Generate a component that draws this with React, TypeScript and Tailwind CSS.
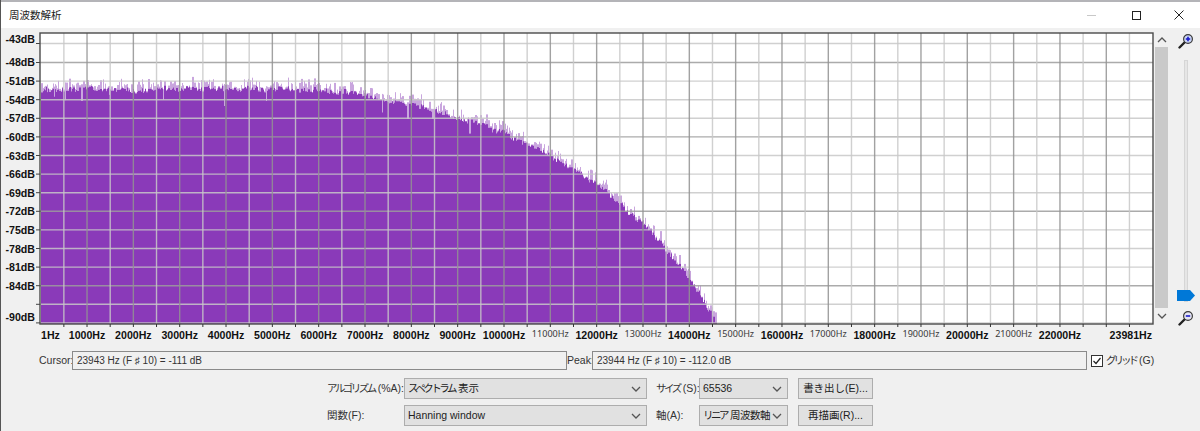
import React from "react";

const font = "[font-family:'Liberation_Sans','Noto_Sans_CJK_JP',sans-serif]";

function rng(seed: number) {
  return () => {
    seed |= 0;
    seed = (seed + 0x6d2b79f5) | 0;
    let t = Math.imul(seed ^ (seed >>> 15), 1 | seed);
    t = (t + Math.imul(t ^ (t >>> 7), 61 | t)) ^ t;
    return ((t ^ (t >>> 14)) >>> 0) / 4294967296;
  };
}

const envPts: [number, number][] = [
  [41, 89], [280, 89], [345, 92], [400, 102], [450, 115], [500, 131], [550, 155], [600, 187], [650, 231], [680, 267], [700, 295], [716, 324],
];
function env(x: number) {
  for (let i = 1; i < envPts.length; i++) {
    const [a, b] = envPts[i - 1];
    const [c, d] = envPts[i];
    if (x <= c) return b + ((d - b) * (x - a)) / (c - a);
  }
  return 324;
}

function buildSpectrum() {
  const r = rng(73);
  let dark = "";
  let light = "";
  let x = 41;
  let slow = 0;
  while (x < 716) {
    const w = r() < 0.7 ? 1 : 2;
    slow = slow * 0.75 + (r() - 0.5) * 2.2;
    let d = env(x) + slow + (r() - 0.5) * 5;
    let top = d - (r() < 0.55 ? 2 + r() * 8 : r() * 2);
    if (r() < 0.04) d += 5 + r() * 10;
    d = Math.min(324, d);
    top = Math.min(324, Math.max(74, top));
    for (let i = 0; i < w; i++) {
      dark += `M${x + i + 0.5} ${d.toFixed(1)}V324`;
      light += `M${x + i + 0.5} ${top.toFixed(1)}V${d.toFixed(1)}`;
    }
    x += w;
  }
  return { dark, light };
}

const X0 = 40.7;
const PX = 46.33;
const freqX = (k: number) => X0 + PX * k;
const ROWS = Array.from({ length: 15 }, (_, i) => 62.5 + 18.6 * i);
const HL = [43.5, ...ROWS];
const DB: [string, number][] = [
  ["-43dB", 39], ["-48dB", 62], ["-51dB", 81], ["-54dB", 99.5], ["-57dB", 118], ["-60dB", 137], ["-63dB", 155.5], ["-66dB", 174], ["-69dB", 192.5], ["-72dB", 211], ["-75dB", 230], ["-78dB", 248.5], ["-81dB", 267], ["-84dB", 286], ["-90dB", 316.5],
];
const NARROW = [11, 13, 15, 17, 19, 21];

function Chart() {
  const { dark, light } = buildSpectrum();
  const verts: number[] = [];
  for (let k = 0.5; k < 24; k += 0.5) verts.push(k);
  return (
    <svg width={1155} height={318} viewBox="0 28 1155 318" className="block shrink-0">
      <rect x={40} y={33} width={1113} height={291} fill="#ffffff" />
      <path d={light} stroke="#c9a6de" strokeWidth={1} fill="none" />
      <path d={dark} stroke="#8a3ab9" strokeWidth={1} fill="none" />
      {HL.map((y, i) => {
        const major = i % 4 === 1;
        return <line key={i} x1={40} x2={1153} y1={y} y2={y} stroke={major ? "#9c9c9c" : "#c8c8c8"} strokeOpacity={0.85} strokeWidth={1.4} />;
      })}
      {verts.map((k) => {
        const major = Number.isInteger(k);
        return <line key={k} x1={freqX(k)} x2={freqX(k)} y1={33} y2={324} stroke={major ? "#929292" : "#c8c8c8"} strokeOpacity={0.85} strokeWidth={1.4} />;
      })}
      <rect x={40} y={33} width={1113} height={291} fill="none" stroke="#4a4a4a" strokeWidth={1.4} />
      {HL.map((y, i) => (
        <line key={i} x1={36} x2={40} y1={y} y2={y} stroke="#444" strokeWidth={1} />
      ))}
      {verts.map((k) => (
        <line key={k} x1={freqX(k)} x2={freqX(k)} y1={324} y2={327} stroke="#333" strokeWidth={1} />
      ))}
      <g fontFamily="'Liberation Sans',sans-serif" fontWeight={700} fontSize={10.6} fill="#111111">
        {DB.map(([t, y]) => (
          <text key={t} x={35} y={y + 4} textAnchor="end">{t}</text>
        ))}
        <text x={41} y={339}>1Hz</text>
        {Array.from({ length: 22 }, (_, i) => i + 1)
          .filter((k) => !NARROW.includes(k))
          .map((k) => (
            <text key={k} x={freqX(k)} y={339} textAnchor="middle">{k * 1000}Hz</text>
          ))}
        <text x={1152} y={339} textAnchor="end">23981Hz</text>
      </g>
      <g fontFamily="'Noto Sans',sans-serif" fontSize={9.6} fill="#3a3a3a">
        {NARROW.map((k) => (
          <text key={k} x={freqX(k)} y={337} textAnchor="middle" textLength={37} lengthAdjust="spacingAndGlyphs">{k * 1000}Hz</text>
        ))}
      </g>
    </svg>
  );
}

function Chevron({ up = false }: { up?: boolean }) {
  return (
    <svg width={10} height={6} viewBox="0 0 10 6" className="block shrink-0">
      <path d={up ? "M1 5 L5 1 L9 5" : "M1 1 L5 5 L9 1"} fill="none" stroke="#555" strokeWidth={1.3} />
    </svg>
  );
}

function Magnifier({ plus }: { plus: boolean }) {
  return (
    <svg width={16} height={16} viewBox="0 0 16 16" className="block">
      <path d="M1.5 14.5 L6.5 9.5" stroke="#222" strokeWidth={2.4} strokeLinecap="round" />
      <circle cx={10} cy={6} r={4.4} fill={plus ? "#c9d4f4" : "#e6e6f2"} stroke="#3a3a3a" strokeWidth={1.2} />
      <path d="M7.8 6 H12.2" stroke="#1a1acb" strokeWidth={1.6} />
      {plus && <path d="M10 3.8 V8.2" stroke="#1a1acb" strokeWidth={1.6} />}
    </svg>
  );
}

function SideRail() {
  return (
    <div className="flex shrink-0 pt-[5px]">
      <div className="flex h-[291px] w-[13px] flex-col items-center">
        <div className="flex h-[14px] items-center"><Chevron up /></div>
        <div className="h-[261px] w-full bg-[#c9c9c9]" />
        <div className="flex h-[16px] items-center"><Chevron /></div>
      </div>
      <div className="ml-[9px] flex w-[18px] flex-col items-center">
        <Magnifier plus />
        <div className="relative mt-[11px] h-[242px] w-[4px] border border-[#d6d6d6] bg-[#e6e6e6]">
          <svg width={18} height={11} viewBox="0 0 18 11" className="absolute left-[-8px] top-[229px] block">
            <path d="M0 0 H13 L18 5.5 L13 11 H0 Z" fill="#0078d7" />
          </svg>
        </div>
        <div className="mt-[8px]"><Magnifier plus={false} /></div>
      </div>
    </div>
  );
}

function Kana({ children }: { children: React.ReactNode }) {
  return <span className="tracking-[-2.5px]">{children}</span>;
}

function Select({ w, children }: { w: string; children: React.ReactNode }) {
  return (
    <div className={`flex h-[21px] items-center justify-between border border-[#adadad] bg-[#e1e1e1] pl-[3px] pr-[5px] text-[10.5px] text-[#222] ${w}`}>
      <span className="whitespace-nowrap">{children}</span>
      <Chevron />
    </div>
  );
}

function Btn({ children }: { children: React.ReactNode }) {
  return (
    <div className="ml-[10px] flex h-[21px] w-[75px] items-center justify-center whitespace-nowrap border border-[#adadad] bg-[#e1e1e1] text-[10.5px] text-[#222]">
      {children}
    </div>
  );
}

function Readout({ w, text }: { w: string; text: string }) {
  return (
    <div className={`flex h-[19px] items-center border border-[#8a8a8a] bg-[#f0f0f0] pl-[4px] text-[10px] text-[#333] ${w}`}>
      <span>{text}</span>
    </div>
  );
}

export default function App() {
  return (
    <div className={`flex h-[431px] w-[1200px] flex-col overflow-hidden border-l border-[#555] bg-[#f0f0f0] ${font}`}>
      <div className="h-[2px] shrink-0 bg-[#b4b4b8]" />
      <div className="flex h-[26px] shrink-0 items-center bg-white pl-[8px]">
        <span className="text-[10.5px] leading-none text-[#222]">周波数解析</span>
        <div className="ml-auto flex items-center">
          <div className="mr-[36px] h-px w-[9px] bg-[#c8c8c8]" />
          <div className="mr-[33px] h-[9px] w-[9px] border border-[#222]" />
          <svg width={10} height={10} viewBox="0 0 10 10" className="mr-[16px] block">
            <path d="M0.5 0.5 L9.5 9.5 M9.5 0.5 L0.5 9.5" stroke="#222" strokeWidth={1} />
          </svg>
        </div>
      </div>
      <div className="flex h-[318px] shrink-0">
        <div className="-ml-px"><Chart /></div>
        <SideRail />
      </div>
      <div className="mt-[5px] flex h-[19px] shrink-0 items-center text-[10.5px] text-[#333]">
        <span className="ml-[38px] w-[33px] whitespace-nowrap">Cursor:</span>
        <Readout w="w-[495px]" text="23943 Hz (F ♯ 10) = -111 dB" />
        <span className="w-[25px] whitespace-nowrap">Peak:</span>
        <Readout w="w-[495px]" text="23944 Hz (F ♯ 10) = -112.0 dB" />
        <div className="ml-[4px] flex h-[12px] w-[12px] items-center justify-center border border-[#333] bg-white">
          <svg width={10} height={10} viewBox="0 0 10 10" className="block">
            <path d="M1.5 5 L4 7.5 L8.5 2" fill="none" stroke="#222" strokeWidth={1.2} />
          </svg>
        </div>
        <span className="ml-[3px] whitespace-nowrap"><span className="tracking-[-3px]">グリッド</span><span className="ml-[3px]">(G)</span></span>
      </div>
      <div className="mt-[8px] flex h-[21px] shrink-0 items-center text-[10.5px] text-[#333]">
        <span className="ml-[326px] w-[77px] whitespace-nowrap"><Kana>アルゴリズム</Kana><span className="ml-[3px]">(%A):</span></span>
        <Select w="w-[243px]"><Kana>スペクトラム</Kana><span className="ml-[3px]">表示</span></Select>
        <span className="ml-[9px] w-[43px] whitespace-nowrap"><Kana>サイズ</Kana><span className="ml-[3px]">(S):</span></span>
        <Select w="w-[89px]">65536</Select>
        <Btn>書き出し(E)...</Btn>
      </div>
      <div className="mt-[6px] flex h-[21px] shrink-0 items-center text-[10.5px] text-[#333]">
        <span className="ml-[326px] w-[77px] whitespace-nowrap">関数(F):</span>
        <Select w="w-[243px]">Hanning window</Select>
        <span className="ml-[9px] w-[43px] whitespace-nowrap">軸(A):</span>
        <Select w="w-[89px]"><Kana>リニア</Kana><span className="ml-[3px] tracking-[-0.5px]">周波数軸</span></Select>
        <Btn>再描画(R)...</Btn>
      </div>
    </div>
  );
}
